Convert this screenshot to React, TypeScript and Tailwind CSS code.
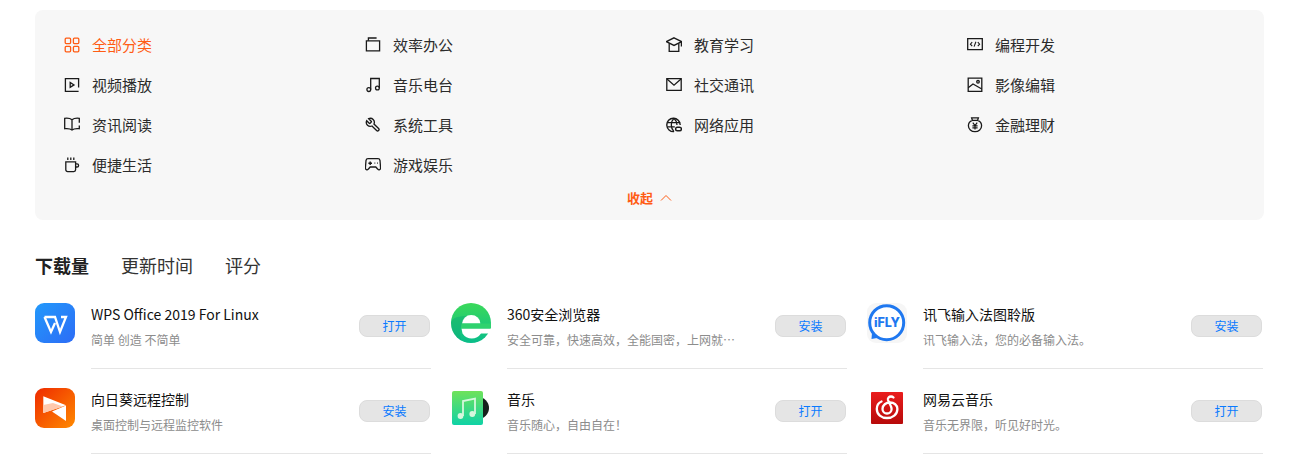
import type { ReactNode } from 'react'

const font = { fontFamily: '"Noto Sans CJK SC", "Noto Sans", sans-serif' }

function Glyph({ children, className = 'text-[#1a1a1a]' }: { children: ReactNode; className?: string }) {
  return (
    <svg
      viewBox="0 0 16 16"
      fill="none"
      stroke="currentColor"
      strokeWidth="1.3"
      className={`w-4 h-4 shrink-0 ${className}`}
    >
      {children}
    </svg>
  )
}

const categories: { label: string; active?: boolean; icon: ReactNode }[] = [
  {
    label: '全部分类',
    active: true,
    icon: (
      <>
        <rect x="1.2" y="1.2" width="5.400" height="5.400" rx="1" />
        <rect x="9.400" y="1.2" width="5.400" height="5.400" rx="1" />
        <rect x="1.2" y="9.400" width="5.400" height="5.400" rx="1" />
        <rect x="9.400" y="9.400" width="5.400" height="5.400" rx="1" />
      </>
    ),
  },
  {
    label: '效率办公',
    icon: (
      <>
        <path d="M1.400 3.800h13.200v10H1.400z" />
        <path d="M3.400 3.800V1h8.200" />
      </>
    ),
  },
  {
    label: '教育学习',
    icon: (
      <>
        <path d="M8 .8 15.600 4.600 8 8.400.4 4.600z" />
        <path d="M3.200 6.200v8.200h9.600V6.200" />
        <path d="M15.400 4.600v5" />
      </>
    ),
  },
  {
    label: '编程开发',
    icon: (
      <>
        <path d="M.7 1.700h14.600v11H.7z" />
        <path d="M5.200 5.200 3.400 7.200 5.200 9.200M10.800 5.200l1.800 2-1.800 2M8.900 4.800 7.100 9.600" strokeWidth="1.100" />
      </>
    ),
  },
  {
    label: '视频播放',
    icon: (
      <>
        <path d="M14.600 10.500V1.700H1.400v12.600h13.200" />
        <path d="M6.200 5.400v5l3.800-2.500z" />
      </>
    ),
  },
  {
    label: '音乐电台',
    icon: (
      <>
        <circle cx="3.800" cy="12.600" r="1.900" />
        <circle cx="12.400" cy="11" r="1.900" />
        <path d="M5.700 12.600V1.500h8.600V11" />
      </>
    ),
  },
  {
    label: '社交通讯',
    icon: (
      <>
        <path d="M.8 1.700h14.400v11.600H.8z" />
        <path d="M1 2 8 8.200 15 2" />
      </>
    ),
  },
  {
    label: '影像编辑',
    icon: (
      <>
        <path d="M1.200 1.200h13.600v13.200H1.200z" />
        <path d="M1.200 10.800 6 7l8.800 5" />
        <circle cx="11" cy="4.800" r="1.300" />
      </>
    ),
  },
  {
    label: '资讯阅读',
    icon: (
      <>
        <path d="M8 2.800C6.400 1.400 3.400 1 .7 1.300v10.400c2.700-.3 5.700 0 7.300 1.300 1.600-1.300 4.600-1.600 7.300-1.300V8.600" />
        <path d="M8 2.800V13M15.300 5.800V1.300C12.600 1 9.600 1.400 8 2.800" />
      </>
    ),
  },
  {
    label: '系统工具',
    icon: (
      <path
        transform="translate(16 0) scale(-0.667 0.667)"
        strokeWidth="2"
        d="M14.700 6.300a1 1 0 0 0 0 1.400l1.600 1.600a1 1 0 0 0 1.400 0l3.770-3.770a6 6 0 0 1-7.940 7.940l-6.910 6.910a2.120 2.120 0 0 1-3-3l6.910-6.910a6 6 0 0 1 7.940-7.940l-3.760 3.760z"
      />
    ),
  },
  {
    label: '网络应用',
    icon: (
      <>
        <path d="M14.200 8A6.700 6.700 0 1 0 8 14.600" strokeWidth="1.400" />
        <path d="M1.600 5.600h12.600M1.600 9.800h7.200" />
        <path d="M8 1.300c-3.600 3.600-3.600 9.700 0 13.300M8 1.300c2 2 3 4.400 3 6.700" />
        <rect x="9.600" y="10.200" width="5.800" height="3.600" rx="1.800" strokeWidth="1.400" />
      </>
    ),
  },
  {
    label: '金融理财',
    icon: (
      <>
        <path d="M4.600.8h6.800l-.8 2.600c2.600 1 4 3 4 5.300 0 3.300-2.900 6-6.600 6s-6.600-2.700-6.600-6c0-2.300 1.400-4.300 4-5.300z" />
        <path d="M5.400 3.400h5.200" />
        <path d="m5.800 5.600 2.200 3 2.200-3M5.400 8.800h5.200M5.400 10.800h5.200M8 8.600v4" strokeWidth="1.200" />
      </>
    ),
  },
  {
    label: '便捷生活',
    icon: (
      <>
        <path d="M1.800 4.800h9.800v8c0 1-.8 1.800-1.800 1.800H3.600c-1 0-1.800-.8-1.800-1.800z" />
        <path d="M11.600 6.800h1.400c.9 0 1.600.7 1.600 1.600s-.7 1.600-1.600 1.600h-1.400" />
        <path d="M3.800.6v2.400M6.800.6v2.400M9.800.6v2.400" />
      </>
    ),
  },
  {
    label: '游戏娱乐',
    icon: (
      <>
        <path d="M3 1.700h10c1.200 0 1.800.8 2 1.800l.6 7.400c.1 1.800-1.800 2.500-2.800 1.300L10.800 10H5.200l-2 2.200c-1 1.200-2.900.5-2.800-1.300L1 3.500c.2-1 .8-1.800 2-1.800Z" />
        <path d="M3.400 6.200h3.600M5.200 4.400V8" strokeWidth="1.400" />
        <path d="M9.600 6.200h.6M12.200 6.200h.6" strokeWidth="1.800" />
      </>
    ),
  },
]

function WpsIcon() {
  return (
    <svg viewBox="0 0 40 40" className="w-10 h-10 shrink-0">
      <defs>
        <linearGradient id="wps" x1="0" y1="0" x2="1" y2="1">
          <stop offset="0" stopColor="#2299fb" />
          <stop offset="1" stopColor="#2d6cf6" />
        </linearGradient>
      </defs>
      <rect width="40" height="40" rx="9" fill="url(#wps)" />
      <path
        d="M9.500 14H20L25 29 31 14H26M9.500 14 16 29 20 20"
        fill="none"
        stroke="#fff"
        strokeWidth="2.300"
      />
    </svg>
  )
}

function SunloginIcon() {
  return (
    <svg viewBox="0 0 40 40" className="w-10 h-10 shrink-0">
      <defs>
        <linearGradient id="sun" x1="0" y1="0" x2="1" y2="1">
          <stop offset="0" stopColor="#ee2a00" />
          <stop offset="1" stopColor="#ff8a00" />
        </linearGradient>
      </defs>
      <rect width="40" height="40" rx="9" fill="url(#sun)" />
      <path d="M8.300 8.300 31 17.300 8.300 25z" fill="#fff" />
      <path d="M8.300 17 8.300 25 28 18.500 18 15z" fill="#ffc9ad" />
      <path d="M31 17.500V33L17 23.500Z" fill="#fff" />
    </svg>
  )
}

function BrowserIcon() {
  return (
    <svg viewBox="0 0 40 40" className="w-10 h-10 shrink-0">
      <defs>
        <linearGradient id="qh" x1="0.500" y1="0" x2="0.500" y2="1">
          <stop offset="0" stopColor="#3bd95a" />
          <stop offset="1" stopColor="#09bd8a" />
        </linearGradient>
      </defs>
      <circle cx="20" cy="20" r="20" fill="url(#qh)" />
      <path d="M11 20.500a9.200 8.400 0 0 1 18.400 0z" fill="#fff" />
      <path d="M10.500 25.500h29.500v5H30a11 11 0 0 1-18.500 0z" fill="#fff" />
      <path d="M10 20.500h30v5H10z" fill="#2fd26e" />
      <path d="M0 20a20 20 0 0 0 11 18c-3-4-2-12 0-18 1-3 3-6 5-7-6 0-16 1-16 7Z" fill="#0aa876" opacity="0.450" />
    </svg>
  )
}

function MusicIcon() {
  return (
    <svg viewBox="0 0 40 40" className="w-10 h-10 shrink-0">
      <defs>
        <linearGradient id="mu" x1="0.500" y1="0" x2="0.500" y2="1">
          <stop offset="0" stopColor="#6fe25a" />
          <stop offset="1" stopColor="#0fd2a6" />
        </linearGradient>
      </defs>
      <circle cx="27" cy="20" r="11" fill="#16211c" />
      <rect x="1" y="3" width="31" height="34" rx="2" fill="url(#mu)" />
      <path d="M12 28V13l12-2.500V26" fill="none" stroke="#d6f7dd" strokeWidth="1.800" />
      <circle cx="9.500" cy="28" r="2.900" fill="#d6f7dd" />
      <circle cx="21.300" cy="26" r="2.900" fill="#d6f7dd" />
    </svg>
  )
}

function IflyIcon() {
  return (
    <svg viewBox="0 0 40 40" className="w-10 h-10 shrink-0">
      <rect width="40" height="40" rx="9" fill="#f6f6f6" />
      <circle cx="19.700" cy="19.700" r="17" fill="#fff" stroke="#1f78f0" strokeWidth="3" />
      <path d="M5 30 10 35 4.500 36Z" fill="#1f78f0" />
      <text
        x="20"
        y="24.300"
        textAnchor="middle"
        fontSize="12.500"
        fontWeight="800"
        fill="#1f78f0"
        fontFamily="Inter, sans-serif"
        textLength="26"
        lengthAdjust="spacingAndGlyphs"
      >
        iFLY
      </text>
    </svg>
  )
}

function NeteaseIcon() {
  return (
    <svg viewBox="0 0 40 40" className="w-10 h-10 shrink-0">
      <defs>
        <linearGradient id="ne" x1="0.500" y1="0" x2="0.500" y2="1">
          <stop offset="0" stopColor="#ea1d1d" />
          <stop offset="1" stopColor="#b70a0a" />
        </linearGradient>
      </defs>
      <rect x="4" y="4" width="32" height="32" rx="1" fill="url(#ne)" />
      <path
        d="M14.500 13.500C11 15 9.800 18 9.800 21C9.800 26.500 14.500 30 20 30S30.400 26.500 30.400 21C30.400 17 27 14.500 23 14.500C19 14.500 15.500 17 15.500 21C15.500 23.500 17.500 25.500 20 25.500S24.600 23.500 24.600 21C24.600 18 22 15 21 12C20.500 10 22 8.500 24 8.500C25 8.500 26 9 26.500 9.500"
        fill="none"
        stroke="#fff"
        strokeWidth="2.300"
        strokeLinecap="round"
      />
    </svg>
  )
}

const apps: { name: string; desc: string; action: string; icon: ReactNode }[] = [
  { name: 'WPS Office 2019 For Linux', desc: '简单 创造 不简单', action: '打开', icon: <WpsIcon /> },
  { name: '360安全浏览器', desc: '安全可靠，快速高效，全能国密，上网就…', action: '安装', icon: <BrowserIcon /> },
  { name: '讯飞输入法图聆版', desc: '讯飞输入法，您的必备输入法。', action: '安装', icon: <IflyIcon /> },
  { name: '向日葵远程控制', desc: '桌面控制与远程监控软件', action: '安装', icon: <SunloginIcon /> },
  { name: '音乐', desc: '音乐随心，自由自在！', action: '打开', icon: <MusicIcon /> },
  { name: '网易云音乐', desc: '音乐无界限，听见好时光。', action: '打开', icon: <NeteaseIcon /> },
]

function AppRow({ app }: { app: (typeof apps)[number] }) {
  return (
    <div className="flex gap-4">
      {app.icon}
      <div className="flex-1 min-w-0 h-[66px] flex items-start justify-between border-b border-[#e5e5e5]">
        <div className="min-w-0 -mt-[1px]">
          <div className="text-sm leading-6 text-[#111]">{app.name}</div>
          <div className="mt-1 text-xs leading-5 text-[#8c8c8c] whitespace-nowrap">{app.desc}</div>
        </div>
        <button className="w-[71px] h-[22px] mt-3 mr-[1px] rounded-lg bg-[#e5e5e5] border border-[#dcdcdc] text-xs leading-none text-[#0a7aff]">
          {app.action}
        </button>
      </div>
    </div>
  )
}

export default function App() {
  return (
    <div className="w-[1290px] h-[458px] overflow-hidden bg-white pt-[10px] pl-[35px] pr-[26px]" style={font}>
      <section className="h-[210px] rounded-lg bg-[#f7f7f7] pt-[15px] pl-[29px]">
        <div className="grid grid-cols-[301px_301px_301px_301px] auto-rows-[40px]">
          {categories.map((c) => (
            <div key={c.label} className="flex items-center gap-3 cursor-pointer">
              <Glyph className={c.active ? 'text-[#ff5c14]' : 'text-[#1a1a1a]'}>{c.icon}</Glyph>
              <span className={`text-[15px] ${c.active ? 'text-[#ff5c14]' : 'text-[#2b2b2b]'}`}>{c.label}</span>
            </div>
          ))}
        </div>
        <div className="-ml-[29px] h-[26px] flex items-center justify-center gap-[7px] text-[13px] font-bold text-[#ff5c14]">
          收起
          <svg viewBox="0 0 12 12" fill="none" stroke="currentColor" strokeWidth="1" className="w-3 h-3">
            <path d="M1 8.500 6 3.500l5 5" />
          </svg>
        </div>
      </section>

      <div className="mt-[30px] h-[30px] flex items-center gap-8 text-lg text-[#333]">
        <span className="font-bold text-[#222]">下载量</span>
        <span>更新时间</span>
        <span>评分</span>
      </div>

      <div className="mt-[23px] grid grid-cols-[396px_396px_396px] gap-x-5 gap-y-[19px]">
        {apps.map((a) => (
          <AppRow key={a.name} app={a} />
        ))}
      </div>
    </div>
  )
}
